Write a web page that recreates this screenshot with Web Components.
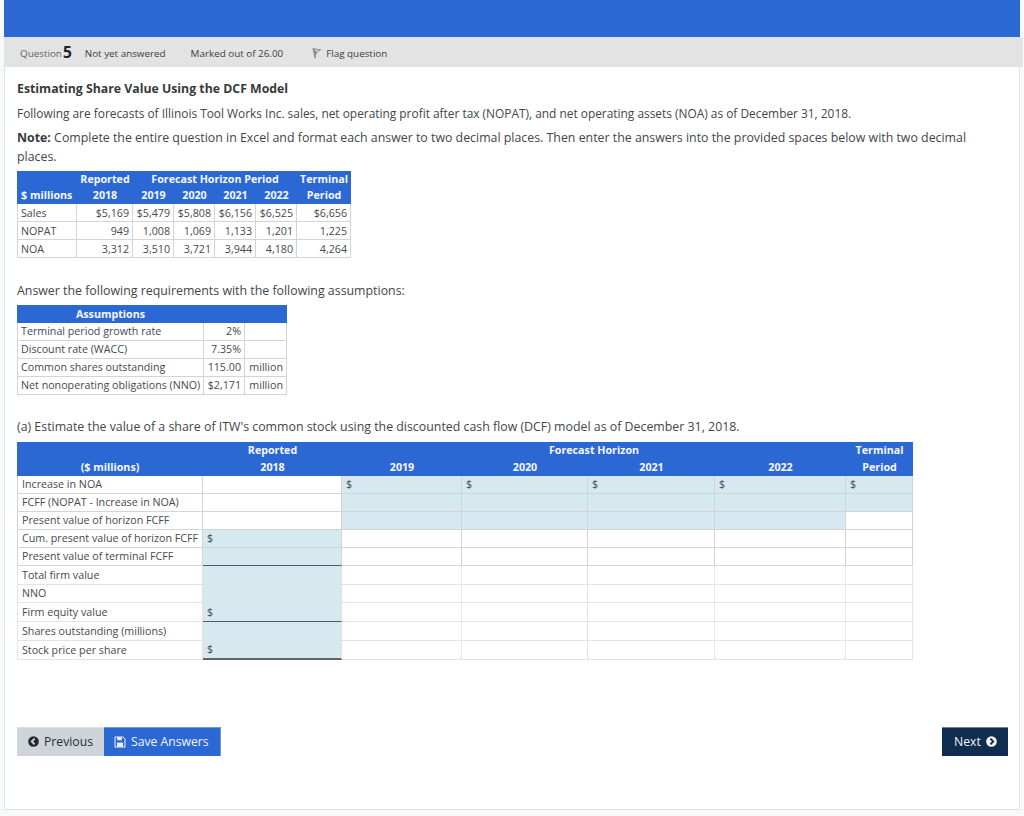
<!DOCTYPE html>
<html lang="en">
<head>
<meta charset="utf-8">
<title>Question 5</title>
<style>
html,body{margin:0;padding:0;background:#f8f9fa;}
body{font-family:"Open Sans",sans-serif;color:#333;height:816px;overflow:hidden;}
</style>
</head>
<body>
<quiz-page>
  <quiz-bar></quiz-bar>
  <quiz-title>Estimating Share Value Using the DCF Model</quiz-title>
  <quiz-text style="margin-top:6px;font-size:11.9px">Following are forecasts of Illinois Tool Works Inc. sales, net operating profit after tax (NOPAT), and net operating assets (NOA) as of December 31, 2018.</quiz-text>
  <quiz-text style="margin-top:5px"><b>Note:</b> Complete the entire question in Excel and format each answer to two decimal places. Then enter the answers into the provided spaces below with two decimal places.</quiz-text>
  <forecast-table style="margin-top:5px"></forecast-table>
  <quiz-text style="margin-top:23px">Answer the following requirements with the following assumptions:</quiz-text>
  <assumptions-table style="margin-top:5px"></assumptions-table>
  <quiz-text style="margin-top:22px">(a) Estimate the value of a share of ITW's common stock using the discounted cash flow (DCF) model as of December 31, 2018.</quiz-text>
  <dcf-table style="margin-top:6px"></dcf-table>
  <quiz-nav></quiz-nav>
</quiz-page>
<script>
const BLUE='#2c68d4';
class QuizPage extends HTMLElement{
  constructor(){super();this.attachShadow({mode:'open'}).innerHTML=`<style>
    :host{display:block;box-sizing:border-box;margin:0 4px;height:810px;width:1016px;background:#fff;border:1px solid #e2e3e4;border-width:0 1px 1px 1px;}
    .top{height:37px;background:${BLUE};margin:0 -1px;}
    .body{padding:0 0 0 12px;}
  </style><div class="top"></div><div class="body"><slot></slot></div>`;}
}
class QuizBar extends HTMLElement{
  constructor(){super();this.attachShadow({mode:'open'}).innerHTML=`<style>
    :host{display:flex;align-items:center;box-sizing:border-box;height:30px;margin:0 -4px 0 -12px;padding:1px 0 0 15px;background:#e3e3e3;font-size:9.85px;color:#3a3f44;white-space:nowrap;}
    .q{color:#666;}
    .n{font-size:15.5px;font-weight:700;color:#1f2327;margin:0 0 0 1px;position:relative;top:-1px;}
    .a{margin-left:13px;}
    .m{margin-left:25px;}
    .f{margin-left:29px;display:flex;align-items:center;gap:4px;}
    svg{display:block;}
  </style><span class="q">Question</span><span class="n">5</span><span class="a">Not yet answered</span><span class="m">Marked out of 26.00</span><span class="f"><svg width="10" height="12" viewBox="0 0 10 12"><path d="M0.4 1 9.8 2.4 5.4 5.2 4 8 3.6 11.6 2.5 11.6Z" fill="#8b9095"/><path d="M2.7 2.4 7 3 4.4 5Z" fill="#d6d6d6"/></svg><span>Flag question</span></span>`;}
}
class QuizTitle extends HTMLElement{
  constructor(){super();this.attachShadow({mode:'open'}).innerHTML=`<style>
    :host{display:block;margin-top:13px;font-size:12.3px;line-height:18px;font-weight:700;color:#373a3c;}
  </style><slot></slot>`;}
}
class QuizText extends HTMLElement{
  constructor(){super();this.attachShadow({mode:'open'}).innerHTML=`<style>
    :host{display:block;font-size:12.36px;line-height:19px;color:#42464a;width:960px;}
    ::slotted(b){color:#373a3c;}
  </style><slot></slot>`;}
}
class DataTable extends HTMLElement{
  config(){return{cols:[],head:[],rows:[]};}
  connectedCallback(){
    const c=this.config();
    const cell=d=>{
      if(d==null)d={};
      if(typeof d==='string')d={t:d};
      const st=[];
      if(d.a)st.push('text-align:'+d.a);
      if(d.bg)st.push('background:#d6e8f0');
      if(d.bb)st.push('border-bottom:'+d.bb);
      return `<td${d.s?` colspan="${d.s}"`:''}${st.length?` style="${st.join(';')}"`:''}>${d.t||''}</td>`;
    };
    const head=c.head.map(r=>`<tr class="h" style="height:${r.h}px">${r.c.map(cell).join('')}</tr>`).join('');
    const rows=c.rows.map(r=>`<tr class="${r.l?'l':''}" style="height:${r.h}px">${r.c.map(cell).join('')}</tr>`).join('');
    const w=c.cols.reduce((a,b)=>a+b,0);
    this.attachShadow({mode:'open'}).innerHTML=`<style>
      :host{display:block;font-size:10.7px;color:#454a4f;}
      table{border-collapse:separate;border-spacing:0;table-layout:fixed;width:${w}px;}
      td{box-sizing:border-box;padding:${c.pt||0}px 3px 0 ${c.pl||4}px;line-height:13px;white-space:nowrap;text-align:right;border-right:1px solid #d4d4d4;border-bottom:1px solid #d4d4d4;overflow:hidden;}
      td:first-child{border-left:1px solid #d4d4d4;text-align:left;}
      tr.l td{border-color:#e4e4e4;}
      tr.h td{background:${BLUE};color:#f4f7fd;font-weight:700;text-align:center;border:0;padding:0 1px;}
      tr.h td:first-child{border:0;}
    </style><table><colgroup>${c.cols.map(x=>`<col style="width:${x}px">`).join('')}</colgroup><tbody>${head}${rows}</tbody></table>`;
  }
}
class ForecastTable extends DataTable{
  config(){return{
    pt:1,pl:3,
    cols:[60,56,41,41,41,41,54],
    head:[
      {h:16,c:['', 'Reported',{t:'Forecast Horizon Period',s:4},'Terminal']},
      {h:17,c:[{t:'$ millions',a:'left;padding-left:4px'},'2018','2019','2020','2021','2022','Period']}
    ],
    rows:[
      {h:18,c:['Sales','$5,169','$5,479','$5,808','$6,156','$6,525','$6,656']},
      {h:18,c:['NOPAT','949','1,008','1,069','1,133','1,201','1,225']},
      {h:18,c:['NOA','3,312','3,510','3,721','3,944','4,180','4,264']}
    ]};}
}
class AssumptionsTable extends DataTable{
  config(){return{
    pl:3,
    cols:[187,41,42],
    head:[{h:18,c:['Assumptions','','']}],
    rows:[
      {h:18,c:['Terminal period growth rate','2%','']},
      {h:18,c:['Discount rate (WACC)','7.35%','']},
      {h:18,c:['Common shares outstanding','115.00','million']},
      {h:18,c:['Net nonoperating obligations (NNO)','$2,171','million']}
    ]};}
}
class DcfTable extends DataTable{
  config(){
    const I={bg:1},D={bg:1,t:'$',a:'left'},blank={};
    const dk='1px solid #555b60';
    return{
    cols:[186,139,120,126,127,131,67],
    head:[
      {h:17,c:['', 'Reported',{t:'Forecast Horizon',s:4},'Terminal']},
      {h:17,c:['($ millions)','2018','2019','2020','2021','2022','Period']}
    ],
    rows:[
      {h:18,c:['Increase in NOA',blank,D,D,D,D,D]},
      {h:18,c:['FCFF (NOPAT - Increase in NOA)',blank,I,I,I,I,I]},
      {h:18,c:['Present value of horizon FCFF',blank,I,I,I,I,blank]},
      {h:18,c:['Cum. present value of horizon FCFF',D,blank,blank,blank,blank,blank]},
      {h:18,c:['Present value of terminal FCFF',{bg:1,bb:dk},blank,blank,blank,blank,blank]},
      {h:19,l:1,c:['Total firm value',I,blank,blank,blank,blank,blank]},
      {h:18,l:1,c:['NNO',I,blank,blank,blank,blank,blank]},
      {h:19,l:1,c:['Firm equity value',{bg:1,t:'$',a:'left',bb:dk},blank,blank,blank,blank,blank]},
      {h:19,l:1,c:['Shares outstanding (millions)',I,blank,blank,blank,blank,blank]},
      {h:19,l:1,c:['Stock price per share',{bg:1,t:'$',a:'left',bb:'2px solid #5f6468'},blank,blank,blank,blank,blank]}
    ]};}
}
class QuizNav extends HTMLElement{
  constructor(){super();this.attachShadow({mode:'open'}).innerHTML=`<style>
    :host{display:flex;justify-content:space-between;margin:67px 11px 0 0;font-size:12.2px;}
    .g{display:flex;}
    .b{display:flex;align-items:center;box-sizing:border-box;height:29px;gap:5px;white-space:nowrap;}
    .p{width:87px;background:#ced4da;color:#2b2f33;padding-left:11px;box-shadow:inset 0 1px 0 #dde1e4;}
    .s{width:117px;background:${BLUE};color:#f1f5fd;padding-left:10px;gap:5px;box-shadow:inset 0 1px 0 #6f97e0,inset -1px 0 0 #6f97e0;}
    .n{width:66px;background:#0f2d4f;color:#f1f3f6;padding-left:12px;box-shadow:inset 0 1px 0 #6f8197;}
    svg{display:block;flex:none;}
  </style>
  <div class="g"><div class="b p"><svg width="11" height="11" viewBox="0 0 11 11"><circle cx="5.5" cy="5.5" r="5.3" fill="#24282c"/><path d="M6.6 2.7 3.8 5.5 6.6 8.3" fill="none" stroke="#ced4da" stroke-width="1.9"/></svg><span>Previous</span></div>
  <div class="b s"><svg width="12" height="12" viewBox="0 0 12 12"><path d="M1 1H9L11 3V11H1Z" fill="none" stroke="#eef3fc" stroke-width="1"/><rect x="3.2" y="1.2" width="4.6" height="3" fill="#eef3fc"/><rect x="3" y="6.6" width="6" height="4.2" fill="#eef3fc"/></svg><span>Save Answers</span></div></div>
  <div class="b n"><span>Next</span><svg width="11" height="11" viewBox="0 0 11 11"><circle cx="5.5" cy="5.5" r="5.3" fill="#f4f6f8"/><path d="M4.4 2.7 7.2 5.5 4.4 8.3" fill="none" stroke="#0f2d4f" stroke-width="1.9"/></svg></div>`;}
}
customElements.define('quiz-page',QuizPage);
customElements.define('quiz-bar',QuizBar);
customElements.define('quiz-title',QuizTitle);
customElements.define('quiz-text',QuizText);
customElements.define('forecast-table',ForecastTable);
customElements.define('assumptions-table',AssumptionsTable);
customElements.define('dcf-table',DcfTable);
customElements.define('quiz-nav',QuizNav);
</script>
</body>
</html>
